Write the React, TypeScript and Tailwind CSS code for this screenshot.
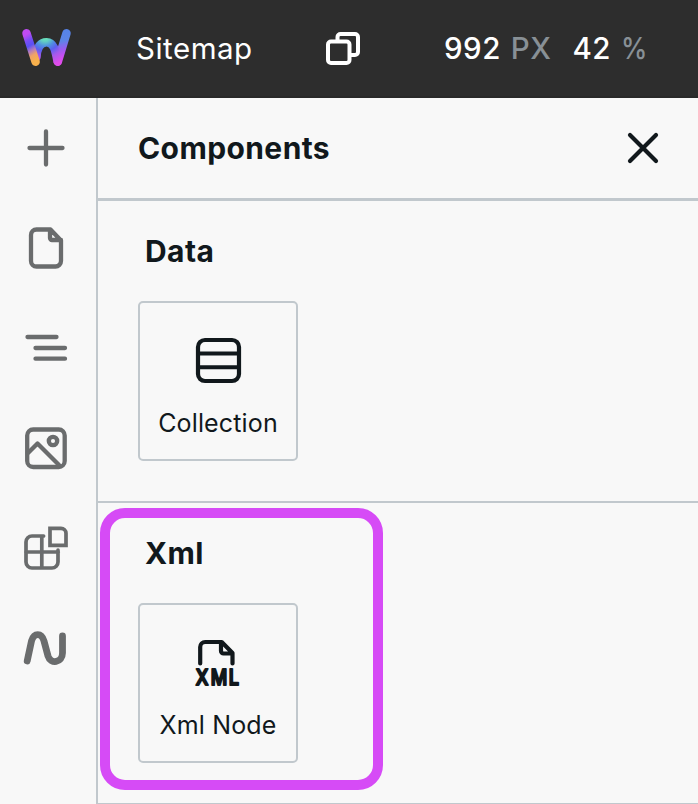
import type { ReactNode } from "react";

const Logo = () => (
  <svg className="h-[98px] w-[98px] shrink-0" viewBox="0 0 98 98" fill="none" strokeLinecap="round" strokeLinejoin="round" strokeWidth="8.5">
    <defs>
      <linearGradient id="right" gradientUnits="userSpaceOnUse" x1="62" y1="32" x2="68" y2="64">
        <stop offset="0" stopColor="#5683e8" />
        <stop offset="0.3" stopColor="#5c85e6" />
        <stop offset="0.55" stopColor="#9a5cf0" />
        <stop offset="0.8" stopColor="#d04bf3" />
        <stop offset="1" stopColor="#dc4cea" />
      </linearGradient>
      <radialGradient id="arch" gradientUnits="userSpaceOnUse" cx="45" cy="37" r="30">
        <stop offset="0" stopColor="#70f2b6" />
        <stop offset="0.18" stopColor="#62d0c2" />
        <stop offset="0.34" stopColor="#5090e0" />
        <stop offset="0.5" stopColor="#5b60f0" />
        <stop offset="0.7" stopColor="#a65aec" />
        <stop offset="1" stopColor="#e04cea" />
      </radialGradient>
      <linearGradient id="left" gradientUnits="userSpaceOnUse" x1="24" y1="37" x2="38" y2="60">
        <stop offset="0" stopColor="#c04bf4" />
        <stop offset="0.22" stopColor="#7a4df5" />
        <stop offset="0.42" stopColor="#5a50f5" />
        <stop offset="0.6" stopColor="#b07ac0" />
        <stop offset="0.78" stopColor="#f0a368" />
        <stop offset="1" stopColor="#f7b04c" />
      </linearGradient>
    </defs>
    <path stroke="url(#right)" d="M66.500 34.200 57.800 62.800" />
    <path stroke="url(#arch)" d="M36.500 58C37 49 40 43.200 46.600 43.200C54 43.200 55.500 52 57.600 62.500" />
    <path stroke="url(#left)" d="M26.500 34.200 35.600 62.800" />
  </svg>
);

const SideIcon = ({ children }: { children: ReactNode }) => (
  <button className="flex h-[100px] w-full items-center justify-center pr-1 text-[#6a6c6d]">
    <svg className="h-12 w-12" viewBox="0 0 48 48" fill="none" stroke="currentColor" strokeWidth="4.300" strokeLinecap="round" strokeLinejoin="round">
      {children}
    </svg>
  </button>
);

const Section = ({ title, label, icon }: { title: string; label: string; icon: ReactNode }) => (
  <section className="h-[302px] border-b-2 border-[#c1c8cd] pl-10">
    <h3 className="flex h-[100px] items-center pl-[7px] text-[30px] font-bold tracking-[0.4px]">{title}</h3>
    <div className="flex h-40 w-40 flex-col items-center rounded-[5px] border-2 border-[#c1c8cd] pt-[33px]">
      {icon}
      <span className="mt-[24px] text-[25px] leading-[30px] tracking-[0.15px] whitespace-nowrap">{label}</span>
    </div>
  </section>
);

const CollectionIcon = () => (
  <svg className="h-12 w-12 shrink-0" viewBox="0 0 48 48" fill="none" stroke="currentColor" strokeWidth="4.200">
    <rect x="4" y="4" width="41" height="41" rx="7" />
    <path strokeWidth="3.900" d="M4 17.500h41M4 31.300h41" />
  </svg>
);

const XmlIcon = () => (
  <svg className="h-12 w-12 shrink-0 overflow-visible" viewBox="0 0 48 48" fill="none" stroke="currentColor" strokeWidth="4.200" strokeLinecap="round" strokeLinejoin="round">
    <path d="M6.200 25.500V9a5 5 0 0 1 5-5h16.500L38.500 15v10.500M27 4v9a2.500 2.500 0 0 0 2.500 2.500h9" />
    <text transform="translate(0 46.500) scale(0.84 1)" x="2.200 19.800 41.500" y="0 0 0" fill="currentColor" strokeWidth="2.200" fontSize="21.500" className="font-medium">XML</text>
  </svg>
);

export default function App() {
  return (
    <div className="flex h-[804px] w-[698px] flex-col overflow-hidden bg-[#f8f8f8] font-['Inter',sans-serif] text-[#11181c]">
      <header className="flex h-[98px] shrink-0 items-center border-b-2 border-[#292929] bg-[#2d2d2d] text-[29.5px] text-white">
        <Logo />
        <span className="ml-[38px] w-[184px] tracking-[0.5px]">Sitemap</span>
        <svg className="h-12 w-12 shrink-0" viewBox="0 0 48 48" fill="none" stroke="currentColor" strokeWidth="4" strokeLinejoin="round">
          <rect x="8" y="17.500" width="21.500" height="21.500" rx="3" />
          <path d="M17.500 17v-4a3 3 0 0 1 3-3H35a3 3 0 0 1 3 3v15a3 3 0 0 1-3 3h-5" />
        </svg>
        <div className="ml-[76px] flex gap-[21px] font-medium tracking-[0.5px] whitespace-pre">
          <span>992<span className="ml-[10px] text-[#889096]">PX</span></span>
          <span>42<span className="ml-[10px] inline-block origin-left scale-x-90 text-[#889096]">%</span></span>
        </div>
      </header>
      <div className="flex min-h-0 flex-1">
        <nav className="w-[98px] shrink-0 border-r-2 border-[#c1c8cd]">
          <SideIcon><path d="M24 7.500v33M7.500 24h33" /></SideIcon>
          <SideIcon><path d="M14.500 5.500h14L39 16.500V37a5.500 5.500 0 0 1-5.500 5.500h-19A5.500 5.500 0 0 1 9 37V11a5.500 5.500 0 0 1 5.500-5.500ZM28 6v8a2 2 0 0 0 2 2h9" /></SideIcon>
          <SideIcon><path d="M5.500 13h29M13.500 24h29.500M13.500 34.700h29.500" /></SideIcon>
          <SideIcon>
            <rect x="5.200" y="5.500" width="37.500" height="37.500" rx="6" />
            <circle cx="31" cy="17" r="4.200" />
            <path d="m6 29 9.500-9.500L37 41" />
          </SideIcon>
          <SideIcon><path strokeWidth="3.700" strokeLinejoin="miter" d="M19.800 12v31.800M3.800 28h32.500M21.600 12H10a6 6 0 0 0-6 6v20a6 6 0 0 0 6 6h20a6 6 0 0 0 6-6V26.200M28 4.300h11a5 5 0 0 1 5 5v12H28Z" /></SideIcon>
          <SideIcon><path strokeWidth="6.800" d="M5.200 37 9.500 17C12 8.500 19.500 8.500 22 17l4 15C28.500 40.500 40.500 39 40.500 29V12" /></SideIcon>
        </nav>
        <main className="relative min-w-0 flex-1">
          <div className="flex h-[103px] items-center justify-between border-b-3 border-[#c1c8cd] pr-[31px] pl-10">
            <h2 className="text-[30px] font-bold tracking-[0.4px]">Components</h2>
            <svg className="h-12 w-12" viewBox="0 0 48 48" fill="none" stroke="currentColor" strokeWidth="4.200" strokeLinecap="round"><path d="m11 11 26 26M37 11 11 37" /></svg>
          </div>
          <Section title="Data" label="Collection" icon={<CollectionIcon />} />
          <Section title="Xml" label="Xml Node" icon={<XmlIcon />} />
          <div className="absolute top-[410px] left-[2px] h-[282px] w-[283px] rounded-[25px] border-10 border-[#d64bf6]" />
        </main>
      </div>
    </div>
  );
}
